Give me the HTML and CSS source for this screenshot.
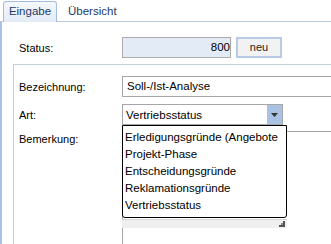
FILE: index.html
```html
<!DOCTYPE html>
<html>
<head>
<meta charset="utf-8">
<link rel="stylesheet" href="styles.css">
</head>
<body>
<div class="tabstrip">
  <div class="tab active">Eingabe</div>
  <div class="tab">Übersicht</div>
</div>
<div class="main">
  <div class="leftbar"></div>
  <div class="content">
    <div class="row status-row">
      <div class="label">Status:</div>
      <div class="status-box">800</div>
      <div class="btn">neu</div>
    </div>
    <div class="group">
      <div class="row">
        <div class="label">Bezeichnung:</div>
        <div class="input wide">Soll-/Ist-Analyse</div>
      </div>
      <div class="row art-row">
        <div class="label">Art:</div>
        <div class="combo">
          <span class="combo-text">Vertriebsstatus</span>
          <span class="combo-btn"><svg width="7" height="4" viewBox="0 0 7 4"><path d="M0 0h7L3.5 4z" fill="#333"/></svg></span>
          <div class="popup">
            <ul class="list">
              <li>Erledigungsgründe (Angebote</li>
              <li>Projekt-Phase</li>
              <li>Entscheidungsgründe</li>
              <li>Reklamationsgründe</li>
              <li>Vertriebsstatus</li>
            </ul>
            <div class="grip-bar">
              <svg width="6" height="6" viewBox="0 0 6 6" class="grip"><rect x="4" y="0" width="2" height="2" fill="#555"/><rect x="2" y="2" width="2" height="2" fill="#888"/><rect x="4" y="2" width="2" height="2" fill="#555"/><rect x="0" y="4" width="2" height="2" fill="#555"/><rect x="2" y="4" width="2" height="2" fill="#555"/><rect x="4" y="4" width="2" height="2" fill="#555"/></svg>
            </div>
          </div>
        </div>
      </div>
      <div class="row memo-row">
        <div class="label memo-label">Bemerkung:</div>
        <div class="memo"></div>
      </div>
    </div>
  </div>
</div>
</body>
</html>
```
FILE: styles.css
```css
html, body {
  margin: 0;
  padding: 0;
}
body {
  width: 331px;
  height: 244px;
  overflow: hidden;
  background: #fff;
  font-family: "Liberation Sans", Arial, sans-serif;
  font-size: 11px;
  color: #000;
  display: flex;
  flex-direction: column;
}
.tabstrip {
  height: 21px;
  border-bottom: 1px solid #b9c9df;
  display: flex;
  align-items: flex-end;
  padding-left: 3px;
  flex: none;
}
.tab {
  height: 19px;
  line-height: 18px;
  color: #1e3a66;
  padding: 0 11px;
  font-size: 11.5px;
}
.tab.active {
  width: 52px;
  padding: 0;
  text-align: center;
  border: 1px solid #a4bddf;
  border-bottom: none;
  border-radius: 3px 3px 0 0;
  background: linear-gradient(#f5f8fc, #e3ebf6);
  margin-bottom: -1px;
  height: 20px;
  position: relative;
}
.main {
  display: flex;
  flex: 1;
  min-height: 0;
}
.leftbar {
  width: 2px;
  background: #a9c1e6;
  flex: none;
}
.content {
  flex: 1;
  padding-top: 15px;
  min-width: 0;
  display: flex;
  flex-direction: column;
}
.row {
  display: flex;
  align-items: center;
  height: 21px;
  flex: none;
}
.label {
  width: 103px;
  flex: none;
}
.status-row {
  padding-left: 17px;
}
.status-box {
  width: 107px;
  height: 19px;
  border: 1px solid #acacac;
  background: #e3ebf7;
  text-align: right;
  line-height: 19px;
  font-size: 11.5px;
}
.btn {
  margin-left: 5px;
  width: 42px;
  height: 17px;
  border: 2px solid #b7cae6;
  background: #f2f2f2;
  text-align: center;
  line-height: 17px;
  color: #222;
}
.group {
  margin-top: 6px;
  margin-left: 11px;
  border-top: 1px solid #c6ced8;
  border-left: 1px solid #c6ced8;
  padding-top: 11px;
  padding-left: 5px;
  flex: 1;
  display: flex;
  flex-direction: column;
  min-height: 0;
}
.input {
  height: 19px;
  border: 1px solid #a6a6a6;
  background: #fff;
  line-height: 19px;
  padding-left: 4px;
  font-size: 11.5px;
}
.wide {
  flex: 1;
  border-right: none;
}
.art-row {
  margin-top: 7px;
}
.combo {
  position: relative;
  width: 159px;
  height: 19px;
  border: 1px solid #a6a6a6;
  display: flex;
  align-items: center;
  flex: none;
  font-size: 11.5px;
}
.combo-text {
  flex: 1;
  padding-left: 3px;
}
.combo-btn {
  width: 15px;
  height: 19px;
  background: #a9c1e3;
  display: flex;
  align-items: center;
  justify-content: center;
}
.popup {
  position: absolute;
  top: 20px;
  left: -1px;
  width: 165px;
  z-index: 2;
}
.list {
  list-style: none;
  margin: 0;
  padding: 3px 0 3px 2px;
  border: 1px solid #000;
  border-radius: 0 0 3px 3px;
  background: #fff;
}
.list li {
  height: 17px;
  line-height: 17px;
  font-size: 11.5px;
  white-space: nowrap;
  overflow: hidden;
}
.grip-bar {
  margin-top: 1px;
  height: 8px;
  background: #efefef;
  border-top: 1px solid #d6d6d6;
  display: flex;
  justify-content: flex-end;
  align-items: center;
  padding-right: 2px;
}
.memo-row {
  margin-top: 6px;
  align-items: stretch;
  height: auto;
  flex: 1;
  min-height: 0;
}
.memo-label {
  padding-top: 2px;
}
.memo {
  flex: 1;
  border-top: 1px solid #a6a6a6;
  border-left: 1px solid #a6a6a6;
}
```
